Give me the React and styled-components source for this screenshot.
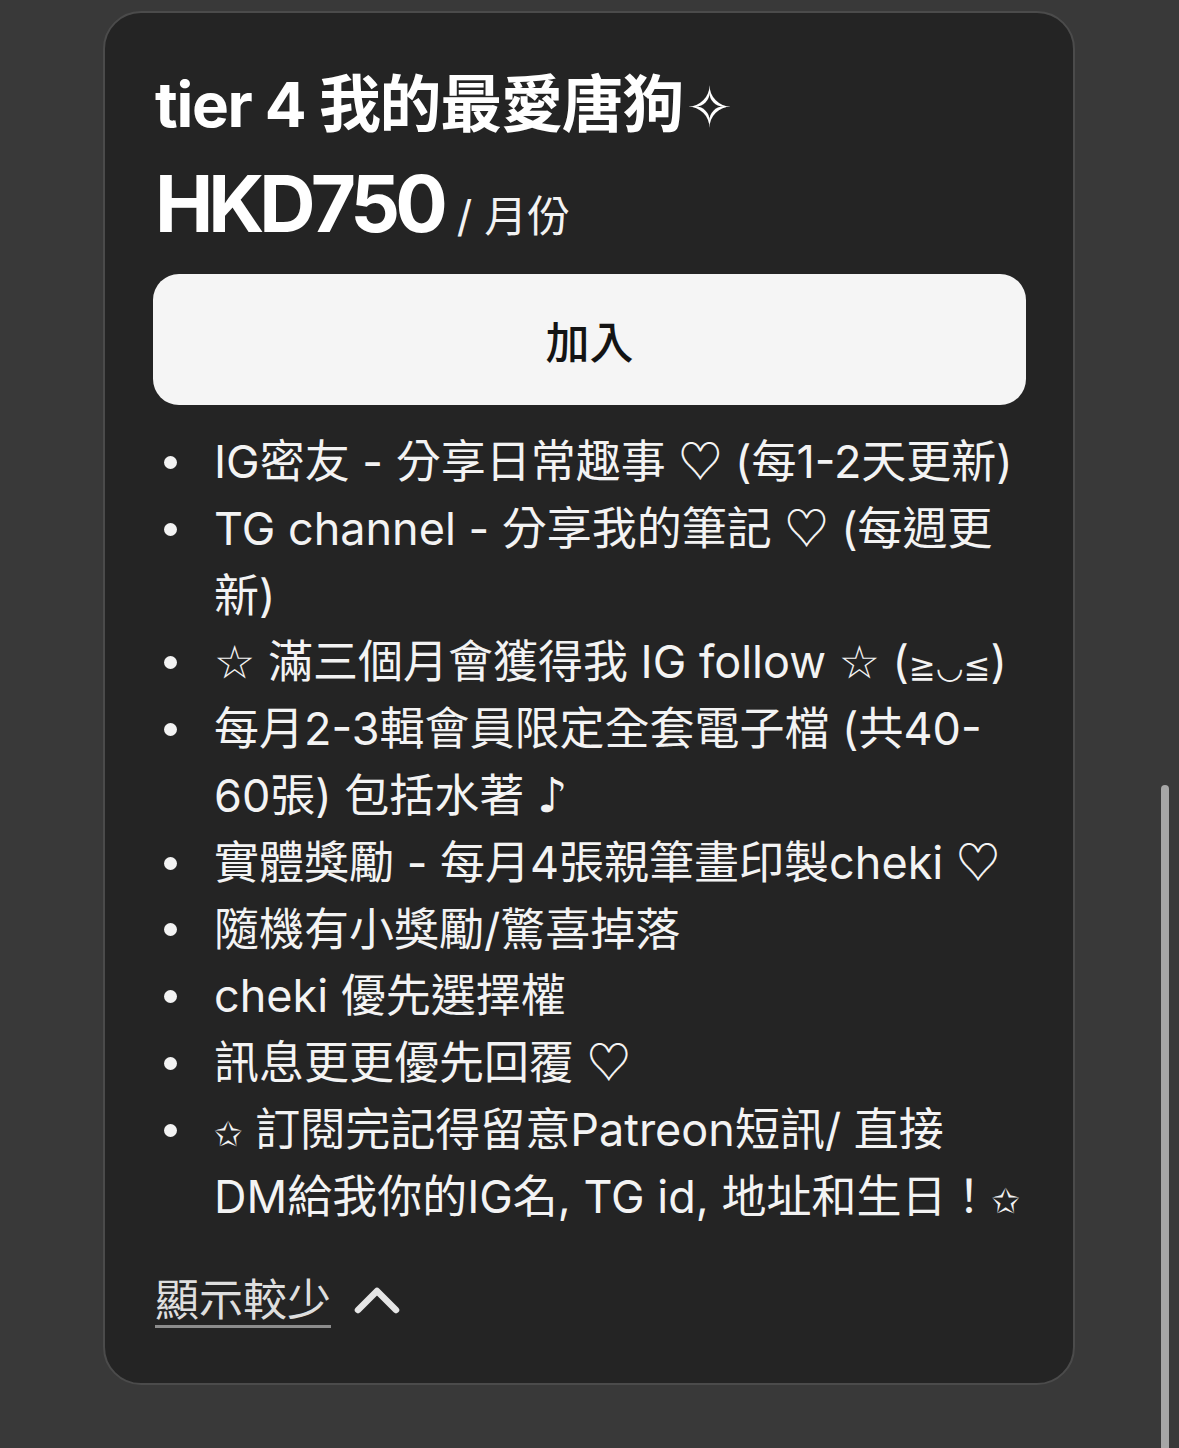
import React from "react";
import styled, { createGlobalStyle } from "styled-components";

const Global = createGlobalStyle`
  html, body { margin: 0; padding: 0; background: #393939; }
  body { font-family: "Inter", "Noto Sans CJK TC", sans-serif; overflow: hidden; }
  * { box-sizing: border-box; }
`;

const Page = styled.div`
  position: relative;
  min-height: 1448px;
  padding: 11px 0 0 103px;
  background: #393939;
`;

const Card = styled.section`
  width: 972px;
  border: 2px solid #4b4b4b;
  border-radius: 38px;
  background: #242424;
  padding: 56px 47px 50px 48px;
  display: flex;
  flex-direction: column;
`;

const Title = styled.h2`
  margin: 0;
  padding-left: 2px;
  font-size: 62px;
  line-height: 72px;
  font-weight: 700;
  color: #ffffff;
  letter-spacing: -1.3px;
`;

const Sparkle = styled.span`
  font-family: "DejaVu Sans", sans-serif;
  font-weight: 400;
  font-size: 56px;
  line-height: 1;
  margin-left: 3px;
`;

const PriceRow = styled.div`
  margin-top: 19px;
  padding-left: 2px;
  font-size: 78px;
  line-height: 88px;
  color: #ffffff;
  white-space: nowrap;
`;

const Amount = styled.span`
  font-weight: 700;
  letter-spacing: -5px;
`;

const Period = styled.span`
  font-size: 43px;
  line-height: 1;
  font-weight: 400;
  margin-left: 14px;
  color: #f2f2f2;
`;

const JoinButton = styled.button`
  margin-top: 26px;
  height: 131px;
  width: 100%;
  border: none;
  border-radius: 26px;
  background: #f5f5f5;
  color: #141414;
  font-family: inherit;
  font-size: 44px;
  font-weight: 500;
  cursor: pointer;
`;

const Perks = styled.ul`
  margin: 24px 0 0 0;
  padding: 0;
  list-style: none;
  color: #f3f3f3;
  font-size: 45px;
  line-height: 66.8px;
  font-weight: 400;
`;

const Perk = styled.li`
  display: flex;
  align-items: flex-start;
`;

const BulletCell = styled.span`
  flex: 0 0 61px;
  height: 66.8px;
  display: flex;
  align-items: center;
  padding-left: 11px;
`;

const Dot = styled.span`
  width: 13px;
  height: 13px;
  border-radius: 50%;
  background: #f3f3f3;
`;

const PerkText = styled.span`
  flex: 1;
  min-width: 0;
`;

const Sym = styled.span`
  font-family: ${(p) => (p.$cjk ? '"Noto Sans CJK TC"' : '"DejaVu Sans"')}, sans-serif;
  font-weight: ${(p) => (p.$bold ? 700 : 400)};
  font-size: ${(p) => p.$size || 40}px;
  line-height: 1;
`;

const ToggleRow = styled.div`
  margin-top: 36px;
  display: flex;
  align-items: center;
  gap: 22px;
  height: 66.8px;
  padding-left: 2px;
`;

const ToggleLink = styled.a`
  font-size: 44px;
  line-height: 66.8px;
  color: #dedede;
  text-decoration: underline;
  text-decoration-color: #8c8c8c;
  text-decoration-thickness: 3px;
  text-underline-offset: 9px;
  cursor: pointer;
`;

const Chevron = styled.svg`
  width: 48px;
  height: 30px;
  display: block;
`;

const ScrollThumb = styled.div`
  position: absolute;
  top: 785px;
  right: 10px;
  width: 8px;
  bottom: -20px;
  border-radius: 4px;
  background: #a6a6a6;
`;

const Heart = () => (
  <Sym $cjk $bold $size={44}>
    ♡
  </Sym>
);

export default function App() {
  return (
    <>
      <Global />
      <Page>
        <Card>
          <Title>
            tier 4 我的最愛唐狗<Sparkle>✧</Sparkle>
          </Title>
          <PriceRow>
            <Amount>HKD750</Amount>
            <Period>/ 月份</Period>
          </PriceRow>
          <JoinButton>加入</JoinButton>
          <Perks>
            <Perk>
              <BulletCell><Dot /></BulletCell>
              <PerkText>IG密友 - 分享日常趣事 <Heart /> (每1-2天更新)</PerkText>
            </Perk>
            <Perk>
              <BulletCell><Dot /></BulletCell>
              <PerkText>TG channel - 分享我的筆記 <Heart /> (每週更<br />新)</PerkText>
            </Perk>
            <Perk>
              <BulletCell><Dot /></BulletCell>
              <PerkText>
                <Sym $size={46}>☆</Sym> 滿三個月會獲得我 IG follow <Sym $size={46}>☆</Sym> (<Sym $size={32}>≧◡≦</Sym>)
              </PerkText>
            </Perk>
            <Perk>
              <BulletCell><Dot /></BulletCell>
              <PerkText>每月2-3輯會員限定全套電子檔 (共40-<br />60張) 包括水著 <Sym $size={48}>♪</Sym></PerkText>
            </Perk>
            <Perk>
              <BulletCell><Dot /></BulletCell>
              <PerkText>實體獎勵 - 每月4張親筆畫印製cheki <Heart /></PerkText>
            </Perk>
            <Perk>
              <BulletCell><Dot /></BulletCell>
              <PerkText>隨機有小獎勵/驚喜掉落</PerkText>
            </Perk>
            <Perk>
              <BulletCell><Dot /></BulletCell>
              <PerkText>cheki 優先選擇權</PerkText>
            </Perk>
            <Perk>
              <BulletCell><Dot /></BulletCell>
              <PerkText>訊息更更優先回覆 <Heart /></PerkText>
            </Perk>
            <Perk>
              <BulletCell><Dot /></BulletCell>
              <PerkText>
                <Sym $size={34}>✩</Sym> 訂閱完記得留意Patreon短訊/ 直接<br />DM給我你的IG名, TG id, 地址和生日！<Sym $size={34}>✩</Sym>
              </PerkText>
            </Perk>
          </Perks>
          <ToggleRow>
            <ToggleLink>顯示較少</ToggleLink>
            <Chevron viewBox="0 0 48 30" fill="none">
              <polyline
                points="5,25 24,6 43,25"
                stroke="#e6e6e6"
                strokeWidth="6.5"
                strokeLinecap="round"
                strokeLinejoin="round"
              />
            </Chevron>
          </ToggleRow>
        </Card>
        <ScrollThumb />
      </Page>
    </>
  );
}
